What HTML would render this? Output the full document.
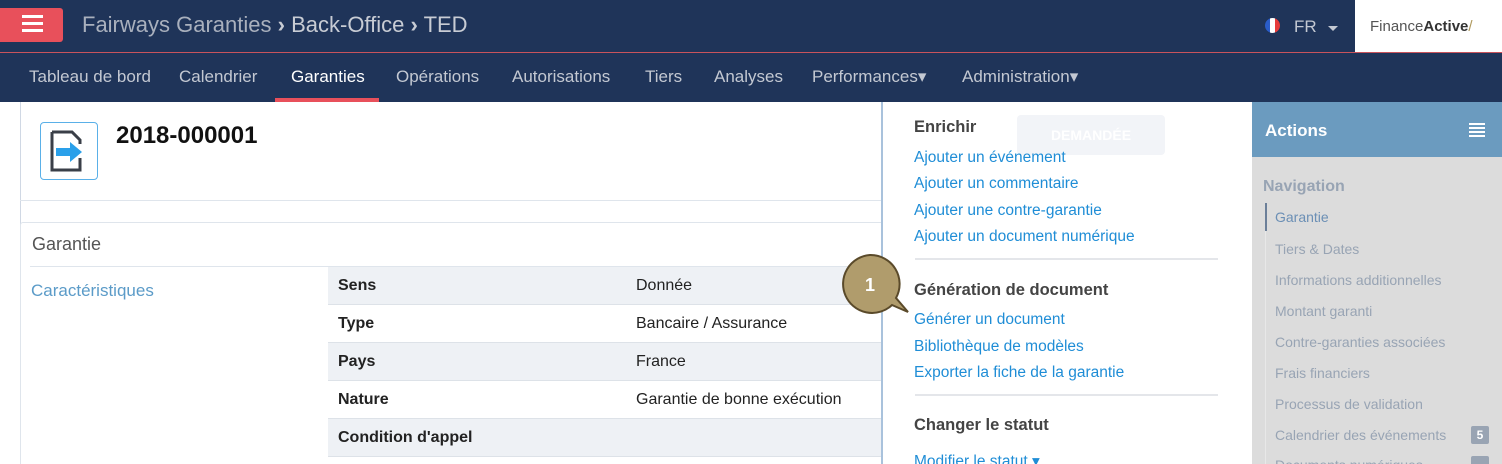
<!DOCTYPE html>
<html style="width:1502px;height:464px;overflow:hidden"><head><meta charset="utf-8"><style>
*{margin:0;padding:0;box-sizing:border-box}
body{width:1502px;height:464px;overflow:hidden;background:#fff;font-family:"Liberation Sans",Arial,sans-serif;position:relative}
.a{position:absolute}
.top{left:0;top:0;width:1502px;height:53px;background:#1f3459;border-bottom:1px solid #c9535c}
.nav{left:0;top:53px;width:1502px;height:49px;background:#1f3459}
.nav span{position:absolute;top:14px;font-size:17px;color:#c3c8d2}
.link{color:#1f8dd6;font-size:15.5px;position:absolute;left:914px}
.hd{color:#444;font-size:16.5px;font-weight:bold;position:absolute;left:914px}
.side{color:#98a4b4;font-size:14px;position:absolute;left:1275px}
.row{position:absolute;left:328px;width:553px;height:38px;border-bottom:1px solid #dde2e8;font-size:16px;color:#222}
.row b{position:absolute;left:10px;top:10px}
.row i{font-style:normal;position:absolute;left:308px;top:10px}
</style></head><body>
<div class="a top"></div>
<div class="a" style="left:0;top:8px;width:63px;height:34px;background:#e8505b;border-radius:0 3px 3px 0"></div>
<div class="a" style="left:22px;top:15px;width:21px;height:3px;background:#fff;box-shadow:0 7px 0 #fff,0 14px 0 #fff"></div>
<div class="a" style="left:82px;top:12px;font-size:22px;color:#a9b0bd;white-space:nowrap">Fairways Garanties <b style="color:#c8ccd4">›</b> <span style="color:#c8ccd4">Back-Office</span> <b style="color:#c8ccd4">›</b> <span style="color:#c8ccd4">TED</span></div>
<div class="a" style="left:1265px;top:18px;width:15px;height:15px;border-radius:50%;background:linear-gradient(90deg,#2a5cc8 33%,#fff 33%,#fff 66%,#e63b3b 66%)"></div>
<div class="a" style="left:1294px;top:17px;font-size:17px;color:#c3c8d2">FR</div>
<div class="a" style="left:1328px;top:26px;border:5px solid transparent;border-top-color:#c3c8d2;border-bottom:0"></div>
<div class="a" style="left:1355px;top:0;width:147px;height:52px;background:#fff"></div>
<div class="a" style="left:1370px;top:18px;font-size:15px;color:#555">Finance<b style="color:#333">Active</b><span style="color:#b09a5e">/</span></div>
<div class="a nav">
<span style="left:29px">Tableau de bord</span><span style="left:179px">Calendrier</span><span style="left:291px;color:#fff">Garanties</span><span style="left:396px">Opérations</span><span style="left:512px">Autorisations</span><span style="left:645px">Tiers</span><span style="left:714px">Analyses</span><span style="left:812px">Performances▾</span><span style="left:962px">Administration▾</span>
<div class="a" style="left:275px;top:45px;width:104px;height:4px;background:#e8505b"></div>
</div>
<div class="a" style="left:20px;top:102px;width:1px;height:362px;background:#d0d8e4"></div>
<div class="a" style="left:20px;top:102px;width:870px;height:99px;border-bottom:1px solid #dfe5ec"></div>
<div class="a" style="left:40px;top:122px;width:58px;height:58px;border:1px solid #5ab0e8;border-radius:4px"></div>
<svg class="a" style="left:48px;top:130px" width="44" height="44" viewBox="0 0 44 44"><path d="M4 2h20l8 8v4M32 28v12H4V2" fill="none" stroke="#3a3f48" stroke-width="3"/><path d="M8 18h14v-6l12 10-12 10v-6H8z" fill="#2aa0ea"/></svg>
<div class="a" style="left:116px;top:122px;font-size:24px;font-weight:bold;color:#111">2018-000001</div>
<div class="a" style="left:20px;top:222px;width:870px;height:250px;border:1px solid #dfe5ec;border-radius:3px"></div>
<div class="a" style="left:32px;top:234px;font-size:18px;color:#555">Garantie</div>
<div class="a" style="left:30px;top:266px;width:860px;height:1px;background:#dfe5ec"></div>
<div class="a" style="left:31px;top:281px;font-size:17px;color:#5b9bc8">Caractéristiques</div>
<div class="row" style="top:267px;background:#eef1f5"><b>Sens</b><i>Donnée</i></div>
<div class="row" style="top:305px"><b>Type</b><i>Bancaire / Assurance</i></div>
<div class="row" style="top:343px;background:#eef1f5"><b>Pays</b><i>France</i></div>
<div class="row" style="top:381px"><b>Nature</b><i>Garantie de bonne exécution</i></div>
<div class="row" style="top:419px;background:#eef1f5"><b>Condition d'appel</b><i></i></div>
<div class="a" style="left:881px;top:102px;width:371px;height:362px;background:#fff;border-left:2px solid #a9c2dc"></div>
<div class="a" style="left:1017px;top:115px;width:148px;height:40px;background:#f2f4f8;border-radius:4px;color:#fff;font-weight:bold;font-size:14px;text-align:center;line-height:40px">DEMANDÉE</div>
<div class="hd" style="top:118px">Enrichir</div>
<div class="link" style="top:149px">Ajouter un événement</div>
<div class="link" style="top:175px">Ajouter un commentaire</div>
<div class="link" style="top:202px">Ajouter une contre-garantie</div>
<div class="link" style="top:228px">Ajouter un document numérique</div>
<div class="a" style="left:915px;top:258px;width:303px;height:2px;background:#e4e6ea"></div>
<div class="hd" style="top:281px">Génération de document</div>
<div class="link" style="top:311px">Générer un document</div>
<div class="link" style="top:338px">Bibliothèque de modèles</div>
<div class="link" style="top:364px">Exporter la fiche de la garantie</div>
<div class="a" style="left:915px;top:394px;width:303px;height:2px;background:#e4e6ea"></div>
<div class="hd" style="top:416px">Changer le statut</div>
<div class="link" style="top:452px">Modifier le statut ▾</div>
<svg class="a" style="left:838px;top:253px" width="72" height="64" viewBox="0 0 72 64"><path d="M32 2a29 29 0 1 0 22 50l16 7-12-14A29 29 0 0 0 32 2z" fill="#b09c6c" stroke="#5a4a2a" stroke-width="2"/><text x="32" y="38" text-anchor="middle" font-family="Liberation Sans" font-weight="bold" font-size="18" fill="#fff">1</text></svg>
<div class="a" style="left:1252px;top:102px;width:250px;height:362px;background:#dcdcdc"></div>
<div class="a" style="left:1252px;top:102px;width:250px;height:55px;background:#6b9bbf"></div>
<div class="a" style="left:1265px;top:121px;font-size:17px;font-weight:bold;color:#fff">Actions</div>
<div class="a" style="left:1469px;top:123px;width:16px;height:2px;background:#fff;box-shadow:0 4px 0 #fff,0 8px 0 #fff,0 12px 0 #fff"></div>
<div class="a" style="left:1263px;top:178px;font-size:16px;font-weight:bold;color:#98a4b4">Navigation</div>
<div class="a" style="left:1265px;top:203px;width:2px;height:28px;background:#6b7f99"></div>
<div class="a" style="left:1265px;top:231px;width:1px;height:233px;background:#e8e8e8"></div>
<div class="side" style="top:209px;color:#6b8fb5">Garantie</div>
<div class="side" style="top:241px">Tiers &amp; Dates</div>
<div class="side" style="top:272px">Informations additionnelles</div>
<div class="side" style="top:303px">Montant garanti</div>
<div class="side" style="top:334px">Contre-garanties associées</div>
<div class="side" style="top:365px">Frais financiers</div>
<div class="side" style="top:396px">Processus de validation</div>
<div class="side" style="top:427px">Calendrier des événements</div>
<div class="a" style="left:1471px;top:426px;width:18px;height:18px;background:#99a4b3;border-radius:2px;color:#fff;font-size:12px;font-weight:bold;text-align:center;line-height:18px">5</div>
<div class="side" style="top:457px">Documents numériques</div>
<div class="a" style="left:1471px;top:456px;width:18px;height:18px;background:#99a4b3;border-radius:2px"></div>
</body></html>
